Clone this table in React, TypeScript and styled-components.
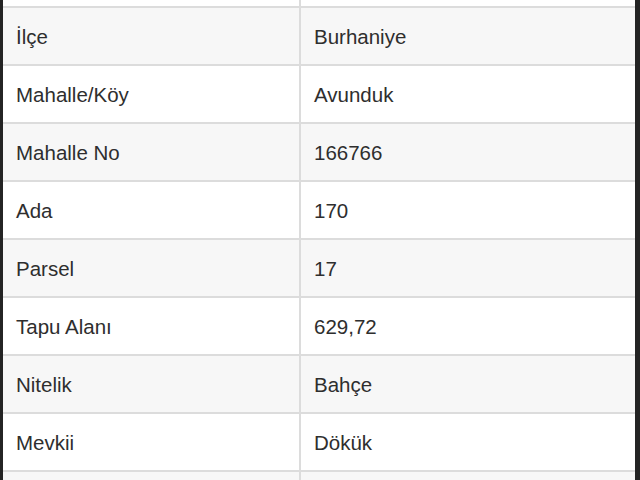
import React from "react";
import styled, { createGlobalStyle } from "styled-components";

const Global = createGlobalStyle`
  html, body { margin: 0; padding: 0; background: #242424; }
  body { font-family: "Liberation Sans", Arial, Helvetica, sans-serif; }
`;

const Page = styled.div`
  width: 640px;
  height: 480px;
  overflow: hidden;
  background: #242424;
`;

const Table = styled.div`
  margin: 0 5px 0 3px;
  display: flex;
  flex-direction: column;
  gap: 2px;
  background: #dcdcdc;
`;

const Row = styled.div<{ $h?: number }>`
  display: grid;
  grid-template-columns: 296px 1fr;
  column-gap: 2px;
  height: ${(p) => p.$h ?? 56}px;
  background: #dcdcdc;
`;

const Cell = styled.div<{ $striped?: boolean }>`
  display: flex;
  align-items: center;
  padding: 3px 0 0 13px;
  background: ${(p) => (p.$striped ? "#f7f7f7" : "#ffffff")};
  color: #2e2e2e;
  font-family: "Liberation Sans", Arial, sans-serif;
  font-size: 20.5px;
  line-height: 1;
  white-space: nowrap;
`;

const rows: [string, string][] = [
  ["İlçe", "Burhaniye"],
  ["Mahalle/Köy", "Avunduk"],
  ["Mahalle No", "166766"],
  ["Ada", "170"],
  ["Parsel", "17"],
  ["Tapu Alanı", "629,72"],
  ["Nitelik", "Bahçe"],
  ["Mevkii", "Dökük"],
];

export default function App() {
  return (
    <Page>
      <Global />
      <Table>
        <Row $h={6}>
          <Cell />
          <Cell />
        </Row>
        {rows.map(([k, v], i) => (
          <Row key={k}>
            <Cell $striped={i % 2 === 0}>{k}</Cell>
            <Cell $striped={i % 2 === 0}>{v}</Cell>
          </Row>
        ))}
        <Row>
          <Cell $striped />
          <Cell $striped />
        </Row>
      </Table>
    </Page>
  );
}
